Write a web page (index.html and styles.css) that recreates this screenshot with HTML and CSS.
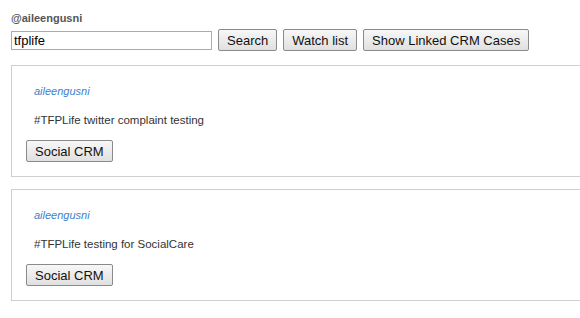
FILE: index.html
```html
<!DOCTYPE html>
<html lang="en">
<head>
    <meta charset="UTF-8">
    <title>Social CRM - Twitter</title>
    <link rel="stylesheet" href="styles.css">
</head>
<body>

<div class="page">
    <div class="handle">@aileengusni</div>

    <form class="search-row" onsubmit="return false">
        <input type="text" class="search-box" value="tfplife">
        <button type="button" class="btn">Search</button>
        <button type="button" class="btn">Watch list</button>
        <button type="button" class="btn">Show Linked CRM Cases</button>
    </form>

    <div class="tweet">
        <div class="tweet-user">aileengusni</div>
        <div class="tweet-text">#TFPLife twitter complaint testing</div>
        <button type="button" class="btn">Social CRM</button>
    </div>

    <div class="tweet">
        <div class="tweet-user">aileengusni</div>
        <div class="tweet-text">#TFPLife testing for SocialCare</div>
        <button type="button" class="btn">Social CRM</button>
    </div>
</div>

</body>
</html>
```

FILE: styles.css
```css
body, html {
    margin: 0;
    overflow: hidden;
    background: #fff;
}
.page {
    padding: 11px 0 0 11px;
    font-family: "Liberation Sans", Arial, sans-serif;
}
.handle {
    font-size: 11px;
    font-weight: bold;
    line-height: 14px;
    color: #555;
}
.search-row {
    display: flex;
    align-items: center;
    gap: 6px;
    margin: 4px 0 0 0;
}
.search-box {
    width: 201px;
    height: 19px;
    margin: 0;
    padding: 0 2px;
    box-sizing: border-box;
    border: 1px solid #a5acb5;
    font-family: "Liberation Sans", Arial, sans-serif;
    font-size: 13px;
    color: #000;
    outline: none;
}
.btn {
    height: 22px;
    margin: 0;
    padding: 0 8px;
    box-sizing: border-box;
    border: 1px solid #8a8a8a;
    border-radius: 2px;
    background: linear-gradient(#f7f7f7, #e0e0e0);
    font-family: "Liberation Sans", Arial, sans-serif;
    font-size: 13px;
    color: #111;
    cursor: pointer;
}
/* card runs off the right edge, so no right border */
.tweet {
    margin-top: 14px;
    padding: 0 0 14px 14px;
    border: 1px solid #cfcfcf;
    border-right: none;
}
.tweet + .tweet {
    margin-top: 12px;
}
.tweet-user {
    margin-top: 18px;
    padding-left: 8px;
    font-size: 11px;
    font-style: italic;
    line-height: 14px;
    color: #3c7fc9;
}
.tweet-text {
    margin-top: 15px;
    padding-left: 8px;
    font-size: 11.5px;
    line-height: 14px;
    color: #333;
}
.tweet .btn {
    display: block;
    margin-top: 13px;
}
```
